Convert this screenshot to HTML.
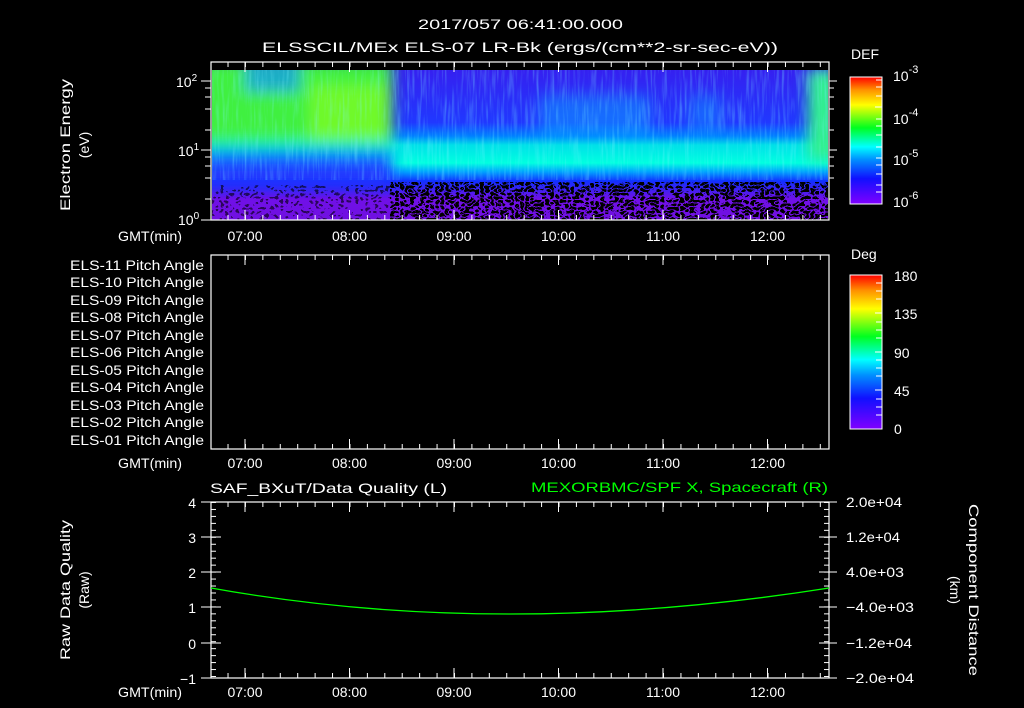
<!DOCTYPE html>
<html><head><meta charset="utf-8"><style>
html,body{margin:0;padding:0;background:#000;width:1024px;height:708px;overflow:hidden}
svg{display:block}
text{font-family:"Liberation Sans",sans-serif;fill:#fff;font-size:14px}
</style></head><body>
<svg width="1024" height="708" viewBox="0 0 1024 708" xmlns="http://www.w3.org/2000/svg">
<defs>
<clipPath id="c1"><rect x="212" y="70" width="616" height="150"/></clipPath>
<pattern id="tx" x="210.1" y="0" width="17.42" height="4" patternUnits="userSpaceOnUse"><rect x="0" y="0" width="1" height="4" fill="#fff"/></pattern>
<pattern id="ty7" x="0" y="502" width="4" height="6.96" patternUnits="userSpaceOnUse"><rect x="0" y="0" width="4" height="1" fill="#fff"/></pattern>
<linearGradient id="cb" x1="0" y1="1" x2="0" y2="0">
<stop offset="0" stop-color="#8000ff"/><stop offset="0.2" stop-color="#1010ff"/><stop offset="0.35" stop-color="#0090ff"/><stop offset="0.45" stop-color="#00ffff"/><stop offset="0.6" stop-color="#00ff20"/><stop offset="0.78" stop-color="#ffff00"/><stop offset="0.9" stop-color="#ff9000"/><stop offset="1" stop-color="#ff0000"/></linearGradient>
<linearGradient id="gr" x1="0" y1="0" x2="0" y2="1">
<stop offset="0" stop-color="#3520f0"/><stop offset="0.35" stop-color="#2038ff"/><stop offset="0.44" stop-color="#0080ff"/><stop offset="0.5" stop-color="#00e0e8"/><stop offset="0.62" stop-color="#00ffe0"/><stop offset="0.68" stop-color="#00a0ff"/><stop offset="0.74" stop-color="#1030ff"/><stop offset="0.8" stop-color="#4020f0"/><stop offset="0.86" stop-color="#7010e8"/><stop offset="1" stop-color="#7010e0"/></linearGradient>
<filter id="bl" x="-20%" y="-20%" width="140%" height="140%"><feGaussianBlur stdDeviation="7"/></filter>
<filter id="blk" x="0" y="0" width="100%" height="100%"><feTurbulence type="turbulence" baseFrequency="0.2 0.28" numOctaves="1" seed="4"/><feColorMatrix type="matrix" values="0 0 0 0 0  0 0 0 0 0  0 0 0 0 0  3.5 0 0 0 0"/><feComponentTransfer><feFuncA type="discrete" tableValues="0 1"/></feComponentTransfer></filter>
<filter id="blk2" x="0" y="0" width="100%" height="100%"><feTurbulence type="turbulence" baseFrequency="0.2 0.28" numOctaves="1" seed="9"/><feColorMatrix type="matrix" values="0 0 0 0 0  0 0 0 0 0  0 0 0 0 0  1.8 0 0 0 0"/><feComponentTransfer><feFuncA type="discrete" tableValues="0 1"/></feComponentTransfer></filter>
<filter id="str" x="0" y="0" width="100%" height="100%"><feTurbulence type="fractalNoise" baseFrequency="0.4 0.03" numOctaves="2" seed="2"/><feColorMatrix type="matrix" values="0 0 0 0 0.2  0 0 0 0 0.9  0 0 0 0 1  2 0 0 0 -0.9"/></filter>
</defs>

<text x="418" y="29" textLength="205" lengthAdjust="spacingAndGlyphs" font-size="16">2017/057 06:41:00.000</text>
<text x="262" y="52" textLength="516" lengthAdjust="spacingAndGlyphs" font-size="16">ELSSCIL/MEx ELS-07 LR-Bk  (ergs/(cm**2-sr-sec-eV))</text>

<g clip-path="url(#c1)">
<rect x="212" y="70" width="616" height="150" fill="url(#gr)"/>
<g filter="url(#bl)">
<rect x="200" y="60" width="192" height="82" fill="#40f040"/>
<rect x="200" y="140" width="192" height="10" fill="#00f0b0"/>
<rect x="200" y="150" width="192" height="14" fill="#1070ff"/>
<rect x="200" y="164" width="192" height="22" fill="#2030ff"/>
<rect x="245" y="62" width="55" height="30" fill="#1090ff" opacity="0.7"/>
<rect x="310" y="85" width="80" height="55" fill="#90ff20" opacity="0.6"/>
<rect x="540" y="95" width="110" height="40" fill="#00d0ff" opacity="0.35"/>
<rect x="690" y="95" width="30" height="35" fill="#00d0ff" opacity="0.3"/>
<rect x="808" y="70" width="30" height="90" fill="#30f090"/>
</g>
<rect x="212" y="70" width="616" height="110" filter="url(#str)" opacity="0.4"/>
<rect x="390" y="182" width="438" height="38" filter="url(#blk)"/>
<rect x="212" y="185" width="178" height="35" filter="url(#blk2)" opacity="0.6"/>
</g>

<rect x="211" y="62" width="618" height="158" fill="none" stroke="#fff" stroke-width="1.2"/>
<rect x="211" y="62" width="618" height="5" fill="url(#tx)"/>
<rect x="211" y="215" width="618" height="5" fill="url(#tx)"/>
<g stroke="#fff" stroke-width="1">
<path d="M245 62v10M349.5 62v10M454 62v10M558.5 62v10M663 62v10M767.5 62v10M245 220v-10M349.5 220v-10M454 220v-10M558.5 220v-10M663 220v-10M767.5 220v-10"/>
<path d="M201 81h10M205 88h6M205 97h6M205 109h6M205 130h6M201 150h10M205 157h6M205 166h6M205 178h6M205 199h6M201 220h10"/>
<path d="M829 81h8M829 88h5M829 97h5M829 109h5M829 130h5M829 150h8M829 157h5M829 166h5M829 178h5M829 199h5"/>
</g>
<text x="176" y="87" font-size="15">10<tspan font-size="10" dy="-6">2</tspan></text>
<text x="178" y="156" font-size="15">10<tspan font-size="10" dy="-6">1</tspan></text>
<text x="178" y="225" font-size="15">10<tspan font-size="10" dy="-6">0</tspan></text>
<text transform="translate(70,145) rotate(-90)" text-anchor="middle" font-size="16" textLength="132" lengthAdjust="spacingAndGlyphs">Electron Energy</text>
<text transform="translate(89,145) rotate(-90)" text-anchor="middle" font-size="17">(eV)</text>
<g font-size="16" text-anchor="middle">
<text x="150" y="241" font-size="15" textLength="64" lengthAdjust="spacingAndGlyphs">GMT(min)</text>
<text x="245" y="241">07:00</text><text x="349.5" y="241">08:00</text><text x="454" y="241">09:00</text><text x="558.5" y="241">10:00</text><text x="663" y="241">11:00</text><text x="767.5" y="241">12:00</text>
</g>

<text x="851" y="59" font-size="16">DEF</text>
<rect x="850" y="77" width="32" height="127" fill="url(#cb)" stroke="#fff" stroke-width="1"/>
<g stroke="#fff"><path d="M876 80h6M876 87h6M876 96h6M875 107h7M876 119h6M876 126h6M876 135h6M876 147h6M876 158h6M876 165h6M876 174h6M876 185h6M876 192h6"/></g>
<text x="893" y="81" font-size="17">10<tspan font-size="11" dy="-8">-3</tspan></text>
<text x="893" y="124" font-size="17">10<tspan font-size="11" dy="-8">-4</tspan></text>
<text x="893" y="165" font-size="17">10<tspan font-size="11" dy="-8">-5</tspan></text>
<text x="893" y="207" font-size="17">10<tspan font-size="11" dy="-8">-6</tspan></text>

<rect x="211" y="255" width="618" height="194" fill="none" stroke="#fff" stroke-width="1.2"/>
<rect x="211" y="255" width="618" height="5" fill="url(#tx)"/>
<rect x="211" y="444" width="618" height="5" fill="url(#tx)"/>
<g stroke="#fff"><path d="M245 255v10M349.5 255v10M454 255v10M558.5 255v10M663 255v10M767.5 255v10M245 449v-10M349.5 449v-10M454 449v-10M558.5 449v-10M663 449v-10M767.5 449v-10"/></g>
<g text-anchor="end" font-size="14">
<text x="204" y="270" textLength="134" lengthAdjust="spacingAndGlyphs">ELS-11 Pitch Angle</text>
<text x="204" y="287" textLength="134" lengthAdjust="spacingAndGlyphs">ELS-10 Pitch Angle</text>
<text x="204" y="305" textLength="134" lengthAdjust="spacingAndGlyphs">ELS-09 Pitch Angle</text>
<text x="204" y="322" textLength="134" lengthAdjust="spacingAndGlyphs">ELS-08 Pitch Angle</text>
<text x="204" y="340" textLength="134" lengthAdjust="spacingAndGlyphs">ELS-07 Pitch Angle</text>
<text x="204" y="357" textLength="134" lengthAdjust="spacingAndGlyphs">ELS-06 Pitch Angle</text>
<text x="204" y="375" textLength="134" lengthAdjust="spacingAndGlyphs">ELS-05 Pitch Angle</text>
<text x="204" y="392" textLength="134" lengthAdjust="spacingAndGlyphs">ELS-04 Pitch Angle</text>
<text x="204" y="410" textLength="134" lengthAdjust="spacingAndGlyphs">ELS-03 Pitch Angle</text>
<text x="204" y="427" textLength="134" lengthAdjust="spacingAndGlyphs">ELS-02 Pitch Angle</text>
<text x="204" y="445" textLength="134" lengthAdjust="spacingAndGlyphs">ELS-01 Pitch Angle</text>
</g>
<g font-size="16" text-anchor="middle">
<text x="150" y="468" font-size="15" textLength="64" lengthAdjust="spacingAndGlyphs">GMT(min)</text>
<text x="245" y="468">07:00</text><text x="349.5" y="468">08:00</text><text x="454" y="468">09:00</text><text x="558.5" y="468">10:00</text><text x="663" y="468">11:00</text><text x="767.5" y="468">12:00</text>
</g>
<text x="851" y="259" font-size="16">Deg</text>
<rect x="850" y="275" width="32" height="154" fill="url(#cb)" stroke="#fff" stroke-width="1"/>
<g stroke="#fff"><path d="M876 283h6M876 291h6M876 299h6M875 313h7M876 322h6M876 330h6M876 338h6M875 352h7M876 360h6M876 368h6M876 376h6M875 390h7M876 399h6M876 407h6M876 415h6"/></g>
<g font-size="17"><text x="894" y="281">180</text><text x="894" y="319">135</text><text x="894" y="358">90</text><text x="894" y="396">45</text><text x="894" y="434">0</text></g>

<text x="210" y="493" textLength="237" lengthAdjust="spacingAndGlyphs" font-size="16">SAF_BXuT/Data Quality (L)</text>
<text x="531" y="492" textLength="297" lengthAdjust="spacingAndGlyphs" font-size="16" style="fill:#00ff00">MEXORBMC/SPF X, Spacecraft (R)</text>
<rect x="211" y="502" width="618" height="176" fill="none" stroke="#fff" stroke-width="1.2"/>
<rect x="211" y="502" width="618" height="5" fill="url(#tx)"/>
<rect x="211" y="673" width="618" height="5" fill="url(#tx)"/>
<rect x="211" y="502" width="5" height="176" fill="url(#ty7)"/>
<rect x="824" y="502" width="5" height="176" fill="url(#ty7)"/>
<g stroke="#fff"><path d="M245 502v10M349.5 502v10M454 502v10M558.5 502v10M663 502v10M767.5 502v10M245 678v-10M349.5 678v-10M454 678v-10M558.5 678v-10M663 678v-10M767.5 678v-10"/>
<path d="M201 502h20M201 537h20M201 572h20M201 607h20M201 643h20M201 678h20M819 502h18M819 537h18M819 572h18M819 607h18M819 643h18M819 678h18"/></g>
<path d="M211 588 Q 500 640 829 588" fill="none" stroke="#00ff00" stroke-width="1.3"/>
<g font-size="17" text-anchor="end"><text x="196" y="508">4</text><text x="196" y="543">3</text><text x="196" y="578">2</text><text x="196" y="613">1</text><text x="196" y="649">0</text><text x="196" y="684">−1</text></g>
<g font-size="15"><text x="846" y="507" textLength="56" lengthAdjust="spacingAndGlyphs">2.0e+04</text><text x="846" y="542" textLength="54" lengthAdjust="spacingAndGlyphs">1.2e+04</text><text x="846" y="577" textLength="58" lengthAdjust="spacingAndGlyphs">4.0e+03</text><text x="846" y="612" textLength="68" lengthAdjust="spacingAndGlyphs">−4.0e+03</text><text x="846" y="648" textLength="66" lengthAdjust="spacingAndGlyphs">−1.2e+04</text><text x="846" y="683" textLength="68" lengthAdjust="spacingAndGlyphs">−2.0e+04</text></g>
<text transform="translate(70,590) rotate(-90)" text-anchor="middle" font-size="16" textLength="140" lengthAdjust="spacingAndGlyphs">Raw Data Quality</text>
<text transform="translate(89,590) rotate(-90)" text-anchor="middle" font-size="17">(Raw)</text>
<text transform="translate(969,590) rotate(90)" text-anchor="middle" font-size="16" textLength="172" lengthAdjust="spacingAndGlyphs">Component Distance</text>
<text transform="translate(950,590) rotate(90)" text-anchor="middle" font-size="17">(km)</text>
<g font-size="16" text-anchor="middle">
<text x="150" y="697" font-size="15" textLength="64" lengthAdjust="spacingAndGlyphs">GMT(min)</text>
<text x="245" y="697">07:00</text><text x="349.5" y="697">08:00</text><text x="454" y="697">09:00</text><text x="558.5" y="697">10:00</text><text x="663" y="697">11:00</text><text x="767.5" y="697">12:00</text>
</g>
</svg>
</body></html>
